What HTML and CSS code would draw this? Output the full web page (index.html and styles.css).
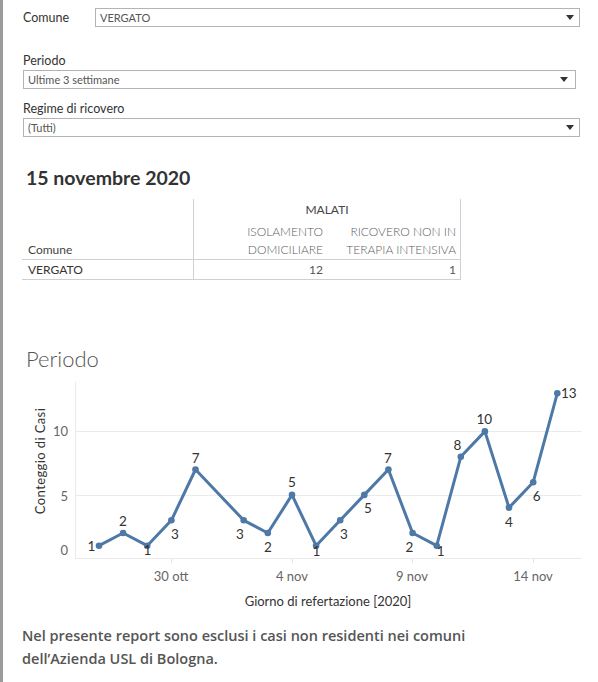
FILE: index.html
```html
<!DOCTYPE html>
<html lang="it">
<head>
<meta charset="utf-8">
<title>Periodo</title>
<link rel="stylesheet" href="styles.css">
</head>
<body>
<div class="page">
  <div class="filter-row">
    <span class="flabel inline">Comune</span>
    <div class="select s1"><span class="sval">VERGATO</span><svg class="arrow" width="8" height="5" viewBox="0 0 8 5"><path d="M0 0H8L4 5Z"/></svg></div>
  </div>
  <div class="filter f2">
    <div class="flabel">Periodo</div>
    <div class="select s2"><span class="sval">Ultime 3 settimane</span><svg class="arrow" width="8" height="5" viewBox="0 0 8 5"><path d="M0 0H8L4 5Z"/></svg></div>
  </div>
  <div class="filter f3">
    <div class="flabel">Regime di ricovero</div>
    <div class="select s3"><span class="sval">(Tutti)</span><svg class="arrow" width="8" height="5" viewBox="0 0 8 5"><path d="M0 0H8L4 5Z"/></svg></div>
  </div>

  <h1 class="title">15 novembre 2020</h1>

  <div class="tbl">
    <div class="c c1 r1"></div>
    <div class="c span r1 group">MALATI</div>
    <div class="c c1 r2 rowhead">Comune</div>
    <div class="c c2 r2 colhead">ISOLAMENTO<br>DOMICILIARE</div>
    <div class="c c3 r2 colhead">RICOVERO NON IN<br>TERAPIA INTENSIVA</div>
    <div class="c c1 r3 name">VERGATO</div>
    <div class="c c2 r3 num">12</div>
    <div class="c c3 r3 num">1</div>
  </div>

  <h2 class="chart-title">Periodo</h2>

  <svg class="chart" width="576" height="240" viewBox="22 372 576 240">
    <g class="grid">
      <line x1="75.5" y1="382" x2="75.5" y2="559"/>
      <line x1="75" y1="431.5" x2="582" y2="431.5"/>
      <line x1="75" y1="495.5" x2="582" y2="495.5"/>
      <line x1="75" y1="558.5" x2="582" y2="558.5"/>
    </g>
    <g class="ticks">
      <line x1="171.5" y1="559" x2="171.5" y2="563"/>
      <line x1="292.5" y1="559" x2="292.5" y2="563"/>
      <line x1="412.5" y1="559" x2="412.5" y2="563"/>
      <line x1="533.5" y1="559" x2="533.5" y2="563"/>
    </g>
    <g class="ylab">
      <text x="68" y="550">0</text>
      <text x="68" y="496">5</text>
      <text x="68" y="431">10</text>
    </g>
    <text class="ytitle" transform="translate(40 461) rotate(-90)">Conteggio di Casi</text>
    <g class="xlab">
      <text x="171" y="576">30 ott</text>
      <text x="292" y="576">4 nov</text>
      <text x="412" y="576">9 nov</text>
      <text x="533" y="576">14 nov</text>
    </g>
    <text class="xtitle" x="328" y="600.5">Giorno di refertazione [2020]</text>

    <polyline class="line" points="99,545.7 123.1,533 147.2,545.7 171.4,520.3 195.5,469.5 243.7,520.3 267.8,533 292,494.9 316.1,545.7 340.2,520.3 364.3,494.9 388.4,469.5 412.6,533 436.7,545.7 460.8,456.8 484.9,431.4 509,507.6 533.2,482.2 557.3,393.3"/>
    <g class="pts">
      <circle cx="99" cy="545.7" r="3.3"/>
      <circle cx="123.1" cy="533" r="3.3"/>
      <circle cx="147.2" cy="545.7" r="3.3"/>
      <circle cx="171.4" cy="520.3" r="3.3"/>
      <circle cx="195.5" cy="469.5" r="3.3"/>
      <circle cx="243.7" cy="520.3" r="3.3"/>
      <circle cx="267.8" cy="533" r="3.3"/>
      <circle cx="292" cy="494.9" r="3.3"/>
      <circle cx="316.1" cy="545.7" r="3.3"/>
      <circle cx="340.2" cy="520.3" r="3.3"/>
      <circle cx="364.3" cy="494.9" r="3.3"/>
      <circle cx="388.4" cy="469.5" r="3.3"/>
      <circle cx="412.6" cy="533" r="3.3"/>
      <circle cx="436.7" cy="545.7" r="3.3"/>
      <circle cx="460.8" cy="456.8" r="3.3"/>
      <circle cx="484.9" cy="431.4" r="3.3"/>
      <circle cx="509" cy="507.6" r="3.3"/>
      <circle cx="533.2" cy="482.2" r="3.3"/>
      <circle cx="557.3" cy="393.3" r="3.3"/>
    </g>
    <g class="dlab">
      <text x="91.5" y="545.5">1</text>
      <text x="123" y="521">2</text>
      <text x="147.5" y="550">1</text>
      <text x="175" y="534">3</text>
      <text x="195.7" y="458">7</text>
      <text x="240" y="534">3</text>
      <text x="268" y="546.5">2</text>
      <text x="292" y="482">5</text>
      <text x="316.5" y="550.5">1</text>
      <text x="344" y="534">3</text>
      <text x="368" y="508">5</text>
      <text x="388" y="457.7">7</text>
      <text x="409.3" y="546.7">2</text>
      <text x="440.7" y="550.5">1</text>
      <text x="457.3" y="445">8</text>
      <text x="484.3" y="419">10</text>
      <text x="509" y="521.7">4</text>
      <text x="536.7" y="495.7">6</text>
      <text x="568.8" y="393">13</text>
    </g>
  </svg>

  <p class="note">Nel presente report sono esclusi i casi non residenti nei comuni<br>dell’Azienda USL di Bologna.</p>
</div>
</body>
</html>
```

FILE: styles.css
```css
html, body {
  margin: 0;
  padding: 0;
  background: #ffffff;
}

body {
  font-family: Lato, "Noto Sans", "Liberation Sans", sans-serif;
  color: #333333;
}

.page {
  border-left: 3px solid #9b9b9b;
  min-height: 682px;
  box-sizing: border-box;
  padding: 8px 18px 0 19px;
}

/* filters */
.filter-row {
  display: flex;
  align-items: center;
  height: 19px;
  padding-left: 1px;
}

.flabel {
  font-size: 12.5px;
  line-height: 16px;
  color: #333333;
  margin-bottom: 1px;
}

.flabel.inline {
  width: 72px;
  margin-bottom: 0;
}

.filter {
  padding-left: 1px;
}

.f2 { margin-top: 26px; }
.f3 { margin-top: 12px; }

.select {
  box-sizing: border-box;
  height: 19px;
  border: 1px solid #b4b4b4;
  display: flex;
  align-items: center;
  justify-content: space-between;
  padding: 0 4px 0 4px;
  background: #ffffff;
}

.s1 { width: 485px; }
.s2 { width: 553px; padding-right: 6px; }
.s3 { width: 557px; }

.sval {
  font-size: 11px;
  color: #555555;
}

.arrow {
  display: block;
  fill: #333333;
  margin-right: 1px;
}

/* title */
.title {
  margin: 29px 0 0 0;
  padding-left: 4px;
  font-size: 19.5px;
  line-height: 24px;
  font-weight: 700;
  color: #333333;
}

/* table */
.tbl {
  margin-top: 9px;
  display: grid;
  grid-template-columns: 172px 133px 134px;
  grid-template-rows: 22px 39px 20px;
  width: 439px;
  font-size: 12px;
}

.c {
  box-sizing: border-box;
}

.c1 {
  grid-column: 1;
  border-right: 1px solid #d0d0d0;
  padding-left: 6px;
}

.c2 { grid-column: 2; }
.c3 { grid-column: 3; border-right: 1px solid #d0d0d0; }

.r1 { grid-row: 1; }
.r2 { grid-row: 2; border-bottom: 1px solid #d0d0d0; }
.r3 { grid-row: 3; border-bottom: 1px solid #d0d0d0; }

.span {
  grid-column: 2 / 4;
  border-right: 1px solid #d0d0d0;
}

.group {
  text-align: center;
  line-height: 22px;
  color: #444444;
}

.rowhead {
  display: flex;
  align-items: flex-end;
  line-height: 18px;
  color: #444444;
}

.colhead {
  text-align: right;
  padding: 2px 4px 0 0;
  line-height: 18px;
  font-weight: 300;
  color: #5e5e5e;
}

.name {
  line-height: 19px;
  color: #333333;
}

.num {
  text-align: right;
  line-height: 19px;
  padding-right: 4px;
  color: #555555;
}

/* chart */
.chart-title {
  margin: 66px 0 0 0;
  padding-left: 4px;
  font-size: 22px;
  line-height: 26px;
  font-weight: 300;
  color: #555555;
}

.chart {
  display: block;
  font-family: Lato, "Noto Sans", "Liberation Sans", sans-serif;
}

.grid line {
  stroke: #ebebeb;
  stroke-width: 1;
}

.ticks line {
  stroke: #e4e4e4;
  stroke-width: 1;
}

.ylab text {
  font-size: 13px;
  fill: #666666;
  text-anchor: end;
  dominant-baseline: central;
}

.xlab text {
  font-size: 13px;
  fill: #666666;
  text-anchor: middle;
  dominant-baseline: central;
}

.ytitle, .xtitle {
  font-size: 13px;
  fill: #333333;
  text-anchor: middle;
  dominant-baseline: central;
}

.ytitle {
  letter-spacing: 0.4px;
}

.line {
  fill: none;
  stroke: #4e79a7;
  stroke-width: 3;
  stroke-linejoin: round;
  stroke-linecap: round;
}

.pts circle {
  fill: #4e79a7;
}

.dlab text {
  font-size: 13.5px;
  fill: #333333;
  text-anchor: middle;
  dominant-baseline: central;
}

/* note */
.note {
  margin: 12px 0 0 0;
  font-family: "Open Sans", "Noto Sans", sans-serif;
  font-size: 14.5px;
  line-height: 23px;
  font-weight: 600;
  color: #555555;
}
```
